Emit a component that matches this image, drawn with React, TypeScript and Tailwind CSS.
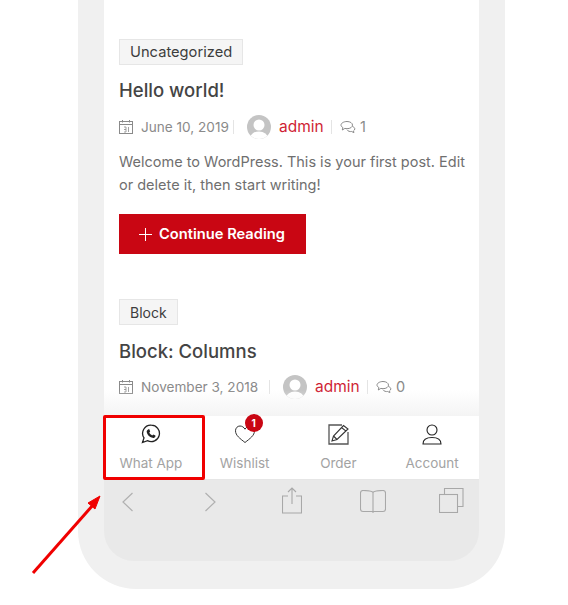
import React from 'react';

const CalendarIcon = () => (
  <svg width="14" height="14" viewBox="0 0 14 14" fill="none" stroke="#8a8a8a" strokeWidth="1" className="shrink-0">
    <rect x="0.5" y="1.5" width="13" height="12" />
    <path d="M0.5 4.5h13M3.5 0v2.5M10.5 0v2.5" />
    <path d="M5 7h2v2.5H5M7 9.5v2.5H5M9.5 7v5" strokeWidth="0.8" />
  </svg>
);

const CommentIcon = () => (
  <svg width="16" height="14" viewBox="0 0 16 14" fill="none" stroke="#8a8a8a" strokeWidth="1" className="shrink-0">
    <path d="M7 1.5c3.2 0 5.5 1.6 5.5 3.6S10.200 8.700 7 8.700c-.8 0-1.500-.1-2.100-.3L2.300 10l.6-2.400C1.700 6.900 1 6 1 5.100 1 3.100 3.800 1.500 7 1.500z" />
    <path d="M12.500 6.500c1.400.5 2.300 1.400 2.300 2.400 0 .8-.5 1.500-1.300 2l.4 1.800-2.200-1.200c-1.800.3-3.800-.3-4.700-1.700" />
  </svg>
);

const Avatar = () => (
  <svg width="24" height="24" viewBox="0 0 24 24" className="shrink-0">
    <defs>
      <clipPath id="avatar-clip"><circle cx="12" cy="12" r="12" /></clipPath>
    </defs>
    <g clipPath="url(#avatar-clip)">
      <rect width="24" height="24" fill="#c4c4c4" />
      <circle cx="12" cy="10" r="5.500" fill="#fff" />
      <ellipse cx="12" cy="23" rx="9" ry="6.500" fill="#fff" />
    </g>
  </svg>
);

const Meta = ({ date, count, dateWidth }: { date: string; count: string; dateWidth: string }) => (
  <div className="flex items-center text-[13.6px] text-[#8a8a8a] h-[24px] whitespace-nowrap">
    <CalendarIcon />
    <span className={`ml-2 shrink-0 ${dateWidth}`}>{date}</span>
    <span className="h-[14px] w-px bg-[#e4e4e4]" />
    <span className="ml-[13px]"><Avatar /></span>
    <span className="ml-2 w-[45px] text-[15.5px] text-[#cf1f35]">admin</span>
    <span className="h-[14px] w-px bg-[#e4e4e4] ml-[7px]" />
    <span className="ml-2"><CommentIcon /></span>
    <span className="ml-[4px] text-[14.5px]">{count}</span>
  </div>
);

const Tag = ({ children, size }: { children: React.ReactNode; size: string }) => (
  <span className={`flex w-fit items-center h-[26px] px-2.5 bg-[#f5f5f5] border border-[#e6e6e6] text-[#3d3d3d] ${size}`}>
    {children}
  </span>
);

const NavItem = ({ icon, label, badge }: { icon: React.ReactNode; label: string; badge?: string }) => (
  <div className="flex-1 flex flex-col items-center pt-[6px]">
    <div className="relative h-[24px] flex items-center justify-center">
      {icon}
      {badge && (
        <span className="absolute -top-[8px] left-[11px] w-[18px] h-[18px] rounded-full bg-[#c90613] text-white text-[10px] font-bold flex items-center justify-center">
          {badge}
        </span>
      )}
    </div>
    <span className="mt-[7px] text-[13.5px] leading-[20px] text-[#a3a3a3]">{label}</span>
  </div>
);

export default function App() {
  return (
    <div className="relative w-[568px] h-[605px] bg-white overflow-hidden" style={{ fontFamily: 'Inter, "Noto Sans", sans-serif' }}>
      {/* Phone frame */}
      <div className="ml-[78px] w-[427px] h-[589px] bg-[#f0f0f0] rounded-b-[58px] px-[26px] pb-[28px]">
        <div className="h-full flex flex-col bg-[#e9e9e9] rounded-b-[30px] overflow-hidden">
          {/* Page content */}
          <div className="relative h-[416px] shrink-0 bg-white overflow-hidden pl-[15px] pr-[12px] pt-[39px]">
            <Tag size="text-[14.7px]">Uncategorized</Tag>
            <h2 className="mt-[10px] text-[18.5px] leading-[30px] font-medium text-[#444]">Hello world!</h2>
            <div className="mt-[10px]">
              <Meta date="June 10, 2019" dateWidth="w-[92px]" count="1" />
            </div>
            <p className="mt-[11px] text-[14.5px] leading-[23px] text-[#6f6f6f]">
              Welcome to WordPress. This is your first post. Edit or delete it, then start writing!
            </p>
            <button className="mt-[18px] flex items-center w-[187px] h-[40px] pl-[20px] bg-[#c90613] text-white text-[14.7px] font-semibold">
              <svg width="13" height="13" viewBox="0 0 13 13" stroke="#fff" strokeWidth="1" className="mr-[7px]">
                <path d="M6.500 0v13M0 6.500h13" />
              </svg>
              Continue Reading
            </button>
            <div className="mt-[45px]">
              <Tag size="text-[14px]">Block</Tag>
            </div>
            <h2 className="mt-[11px] text-[18.5px] leading-[30px] font-medium text-[#444]">Block: Columns</h2>
            <div className="mt-[9px]">
              <Meta date="November 3, 2018" dateWidth="w-[128px]" count="0" />
            </div>
            <div className="absolute left-0 right-0 bottom-0 h-[26px] bg-gradient-to-b from-white/0 to-[#f4f4f4]" />
          </div>

          {/* Bottom nav */}
          <div className="h-[64px] shrink-0 bg-white flex border-b border-[#e6e6e6]">
            <NavItem
              label="What App"
              icon={
                <svg width="20" height="20" viewBox="0 0 20 20" fill="none" stroke="#222" strokeWidth="1.300">
                  <path d="M10.300 1.200a8.200 8.200 0 1 1-3.800 15.500L1.500 18.500l1.500-4.600a8.200 8.200 0 0 1 7.300-12.700z" />
                  <path d="M7.300 5.200l1 .1.900 2.200-.9 1.100c.6 1.300 1.600 2.200 2.900 2.900l1.100-1.100 2.100 1v1c-.4 1.200-1.700 1.700-3 1.400-3-.8-5.200-3-5.700-5.800-.2-1.100.5-1.800 1.600-2.800z" fill="#222" stroke="none" />
                </svg>
              }
            />
            <NavItem
              label="Wishlist"
              badge="1"
              icon={
                <svg width="22" height="20" viewBox="0 0 22 20" fill="none" stroke="#333" strokeWidth="1">
                  <path d="M11 18.500C6 14.500 1.500 11.500 1.500 6.800 1.500 4 3.500 2 6 2c2 0 3.800 1.100 5 3.200C12.200 3.100 14 2 16 2c2.500 0 4.500 2 4.500 4.800 0 4.700-4.500 7.700-9.500 11.700z" />
                </svg>
              }
            />
            <NavItem
              label="Order"
              icon={
                <svg width="21" height="21" viewBox="0 0 21 21" fill="none" stroke="#333" strokeWidth="1.100">
                  <path d="M14 1H1v19h19V8" stroke="#555" strokeWidth="1.300" />
                  <path d="M4 17l1.500-5L15.500 1.500 20 5 9 15.500 4 17zM5.500 12L9 15.500M13.500 3.500L18 7.200" />
                </svg>
              }
            />
            <NavItem
              label="Account"
              icon={
                <svg width="20" height="21" viewBox="0 0 20 21" fill="none" stroke="#222" strokeWidth="1.100">
                  <circle cx="10" cy="6" r="5" />
                  <path d="M1 20c0-4.500 3.500-6.500 9-6.500s9 2 9 6.500z" />
                </svg>
              }
            />
          </div>

          {/* Safari toolbar */}
          <div className="flex-1 flex items-start pl-[18px] pt-[7px]">
            <svg width="12" height="20" viewBox="0 0 12 20" fill="none" stroke="#b0b0b0" strokeWidth="1.200" className="mt-[5px]">
              <path d="M10.500 1L1 10l9.500 9" />
            </svg>
            <svg width="12" height="20" viewBox="0 0 12 20" fill="none" stroke="#b0b0b0" strokeWidth="1.200" className="ml-[70px] mt-[5px]">
              <path d="M1.500 1L11 10l-9.500 9" />
            </svg>
            <svg width="20" height="27" viewBox="0 0 20 27" fill="none" stroke="#a8a8a8" strokeWidth="1.100" className="ml-[66px]">
              <path d="M6 9H.5v17h19V9H14M10 17V1M6 5l4-4 4 4" />
            </svg>
            <svg width="26" height="24" viewBox="0 0 26 24" fill="none" stroke="#a8a8a8" strokeWidth="1.100" className="ml-[58px] mt-[3px]">
              <path d="M13 2.500C12 1 10 .5 3 .5 1.500.5.500 1.500.500 3v16c0 1.500 1 2.500 2.500 2.500h10h10c1.500 0 2.500-1 2.500-2.500V3c0-1.500-1-2.500-2.500-2.500-7 0-9 .5-10 2zM13 2.500V23" />
            </svg>
            <svg width="25" height="25" viewBox="0 0 25 25" fill="none" stroke="#a8a8a8" strokeWidth="1.100" className="ml-[53px] mt-[1px]">
              <rect x="0.500" y="6.500" width="18" height="18" />
              <path d="M5.500 6.500v-6h18.500v18h-5.500" />
            </svg>
          </div>
        </div>
      </div>

      {/* Annotation */}
      <div className="absolute left-[103px] top-[415px] w-[102px] h-[65px] border-[3px] border-[#f00000] rounded-[2px]" />
      <svg className="absolute left-0 top-0" width="568" height="605" viewBox="0 0 568 605" fill="none">
        <path d="M33 573L93 505" stroke="#f00000" strokeWidth="3" />
        <path d="M100 496L95 509 88 503 z" fill="#f00000" stroke="#f00000" strokeWidth="1" />
      </svg>
    </div>
  );
}
